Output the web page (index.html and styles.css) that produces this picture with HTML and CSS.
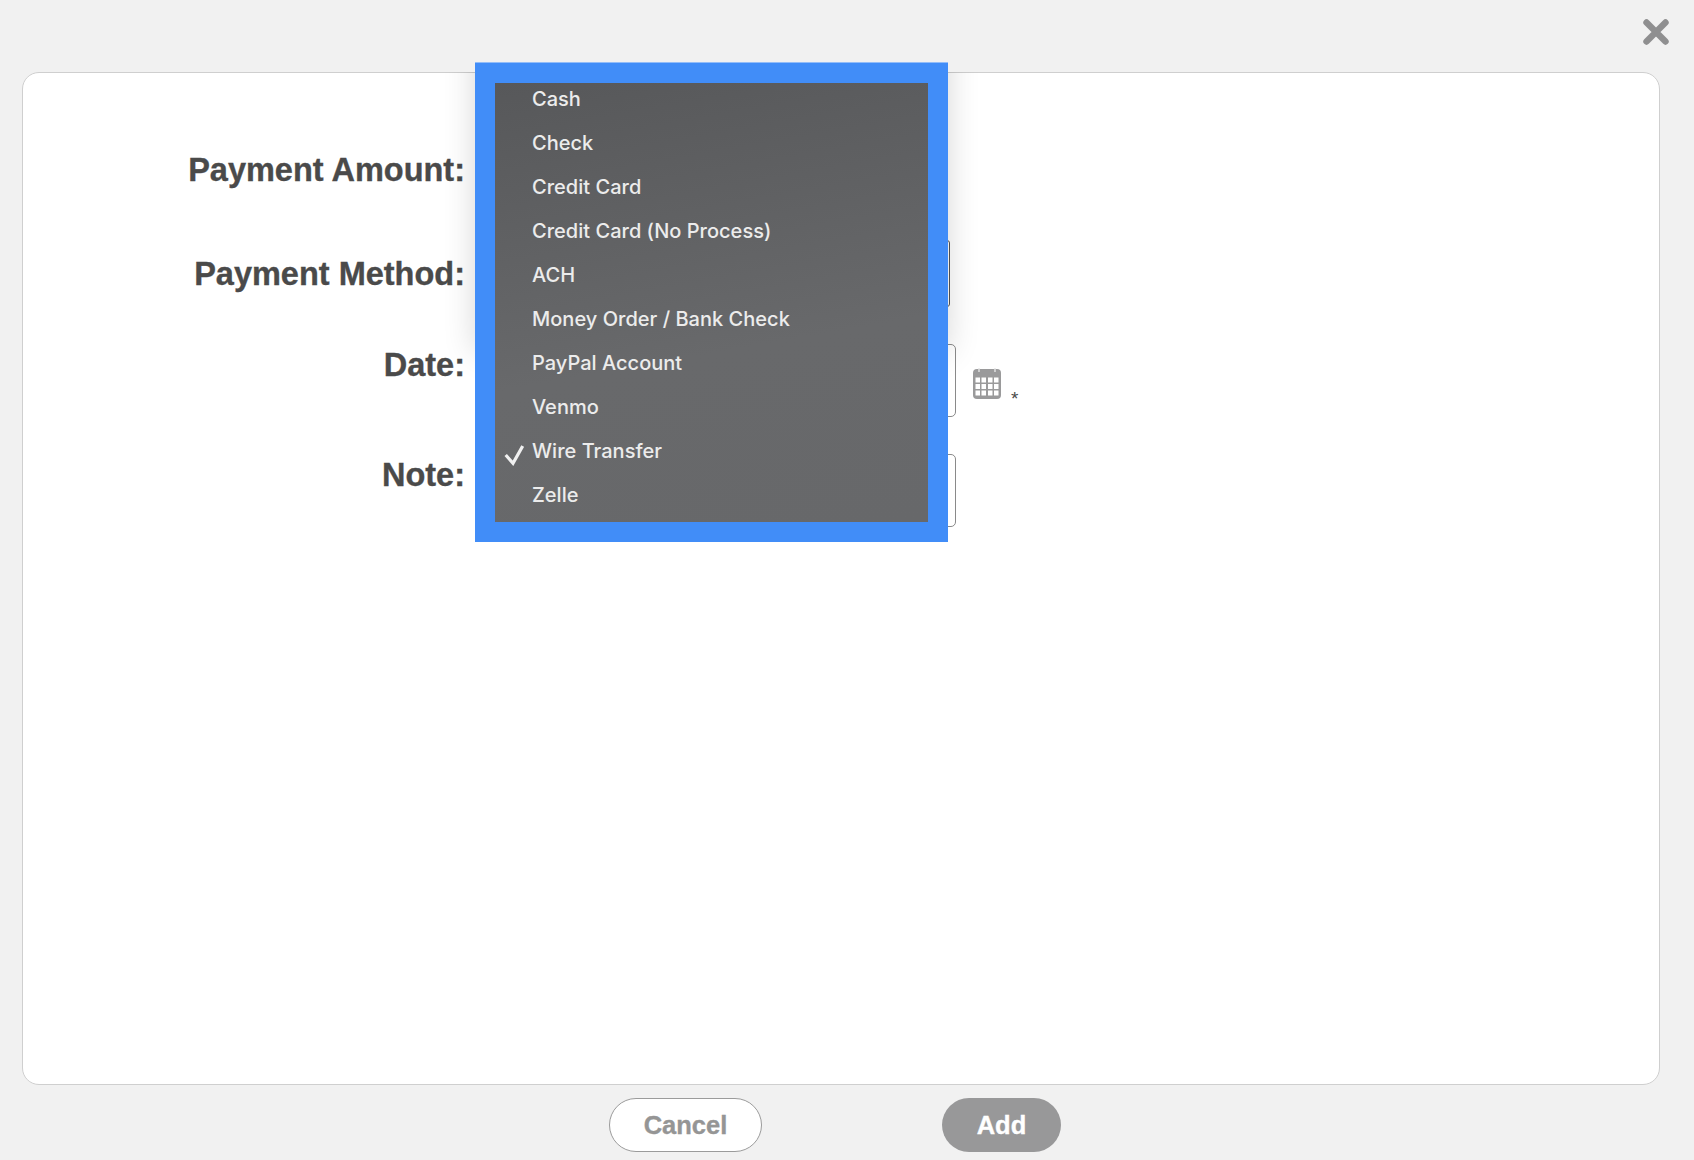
FILE: index.html
```html
<!DOCTYPE html>
<html lang="en">
<head>
<meta charset="utf-8">
<title>Add Payment</title>
<link rel="stylesheet" href="styles.css">
</head>
<body>
<div class="dialog">
  <header class="topbar">
    <button class="close" aria-label="Close">
      <svg width="26" height="26" viewBox="0 0 26 26"><path d="M3.5 3.5 22.5 22.5M22.5 3.5 3.5 22.5" fill="none" stroke="#8f8f90" stroke-width="6.4" stroke-linecap="round"/></svg>
    </button>
  </header>
  <main class="card">
    <form class="form">
      <div class="row row-amount">
        <label class="label">Payment Amount:</label>
      </div>
      <div class="row row-method">
        <label class="label">Payment Method:</label>
        <div class="field field-select"></div>
      </div>
      <div class="row row-date">
        <label class="label">Date:</label>
        <div class="field field-wide"></div>
        <svg class="cal" width="28" height="31" viewBox="0 0 28 31">
          <path d="M4 1h20a4 4 0 0 1 4 4v22a4 4 0 0 1-4 4H4a4 4 0 0 1-4-4V5a4 4 0 0 1 4-4z" fill="#9a9a9b"/>
          <path d="M6 0v4M22 0v4" stroke="#e4e4e4" stroke-width="1.4"/>
          <g fill="#fff">
            <rect x="2.500" y="9.500" width="4.500" height="5"/><rect x="8.500" y="9.500" width="4.500" height="5"/><rect x="15" y="9.500" width="4.500" height="5"/><rect x="21" y="9.500" width="4.500" height="5"/>
            <rect x="2.500" y="16" width="4.500" height="5"/><rect x="8.500" y="16" width="4.500" height="5"/><rect x="15" y="16" width="4.500" height="5"/><rect x="21" y="16" width="4.500" height="5"/>
            <rect x="2.500" y="22.500" width="4.500" height="5"/><rect x="8.500" y="22.500" width="4.500" height="5"/><rect x="15" y="22.500" width="4.500" height="5"/><rect x="21" y="22.500" width="4.500" height="5"/>
          </g>
        </svg>
        <span class="req">*</span>
      </div>
      <div class="row row-note">
        <label class="label">Note:</label>
        <div class="field field-wide field-note"></div>
      </div>
    </form>
  </main>
  <footer class="actions">
    <button class="btn btn-cancel">Cancel</button>
    <button class="btn btn-add">Add</button>
  </footer>
</div>
<div class="menu">
  <ul class="menu-list">
    <li class="menu-item">Cash</li>
    <li class="menu-item">Check</li>
    <li class="menu-item">Credit Card</li>
    <li class="menu-item">Credit Card (No Process)</li>
    <li class="menu-item">ACH</li>
    <li class="menu-item">Money Order / Bank Check</li>
    <li class="menu-item">PayPal Account</li>
    <li class="menu-item">Venmo</li>
    <li class="menu-item menu-item-checked">
      <svg class="check" width="20" height="24" viewBox="0 0 20 24"><path d="M1.700 13 9 21.300 18.700 4" fill="none" stroke="#f0f0f0" stroke-width="3.200"/></svg>
      Wire Transfer
    </li>
    <li class="menu-item">Zelle</li>
  </ul>
</div>
</body>
</html>
```
FILE: styles.css
```css
* { box-sizing: border-box; }
html, body { margin: 0; height: 100%; }
body {
  background: #f1f1f1;
  font-family: "Liberation Sans", Arial, sans-serif;
  overflow: hidden;
}
.dialog {
  display: flex;
  flex-direction: column;
  height: 1160px;
  padding: 0 34px 0 22px;
}
.topbar {
  height: 72px;
  display: flex;
  justify-content: flex-end;
  padding: 19px 0 0;
}
.close {
  width: 26px;
  height: 26px;
  padding: 0;
  margin-right: -9px;
  border: 0;
  background: none;
  display: block;
}
.close svg { display: block; }
.card {
  height: 1013px;
  background: #fff;
  border: 1px solid #cfcfcf;
  border-radius: 17px;
  padding: 64px 0 0;
}
.form {
  display: flex;
  flex-direction: column;
  gap: 37px;
}
.row {
  display: flex;
  align-items: flex-start;
}
.row-amount { height: 66px; align-items: center; }
.row-method { height: 67px; align-items: center; }
.row-date { height: 73px; }
.row-note { height: 73px; }
.label {
  width: 442px;
  flex: none;
  text-align: right;
  font-size: 32.5px;
  font-weight: 700;
  line-height: 42px;
  color: #4a4a4a;
  -webkit-text-stroke: 0.35px #4a4a4a;
}
.field {
  margin-left: 15px;
  border: 1px solid #8a8a8a;
  border-radius: 5px;
  background: #fff;
  height: 100%;
}
.field-select { width: 470px; border-color: #555; border-radius: 3px; }
.field-wide { width: 476px; }
.cal { margin: 24px 0 0 17px; flex: none; }
.req {
  margin: 45px 0 0 10px;
  font-size: 19px;
  line-height: 20px;
  color: #4a4a4a;
}
.actions {
  display: flex;
  padding: 13px 0 0 587px;
  gap: 180px;
}
.btn {
  height: 54px;
  border-radius: 27px;
  font-family: "Liberation Sans", Arial, sans-serif;
  font-size: 25.5px;
  font-weight: 700;
  padding: 0;
}
.btn-cancel {
  width: 153px;
  background: #fff;
  border: 1px solid #9b9b9b;
  color: #959595;
  -webkit-text-stroke: 0.35px #959595;
}
.btn-add {
  width: 119px;
  background: #989899;
  border: 0;
  color: #fff;
  -webkit-text-stroke: 0.35px #fff;
}
.menu {
  position: absolute;
  z-index: 1;
  left: 475px;
  top: 63px;
  width: 473px;
  height: 479px;
  border: 20px solid #418df8;
  background: linear-gradient(170deg, #57585a 0%, #68696b 60%, #67686a 100%);
}
.menu::before {
  content: "";
  position: absolute;
  z-index: -1;
  top: -11px;
  left: -20px;
  right: -20px;
  bottom: -20px;
  box-shadow: 0 -190px 30px rgba(0, 0, 0, 0.16);
  clip-path: inset(0 -50px 0 -50px);
}
.menu::after {
  content: "";
  position: absolute;
  top: -21px;
  left: -20px;
  right: -20px;
  height: 1px;
  background: #93bdf9;
}
.menu-list {
  list-style: none;
  margin: 0;
  padding: 0;
  margin-top: -6px;
}
.menu-item {
  position: relative;
  height: 44px;
  line-height: 44px;
  padding-left: 37px;
  font-family: Inter, "Noto Sans", sans-serif;
  font-size: 20px;
  font-weight: 500;
  letter-spacing: 0.02px;
  color: #ececec;
  white-space: nowrap;
}
.check {
  position: absolute;
  left: 9px;
  top: 13px;
}
```
